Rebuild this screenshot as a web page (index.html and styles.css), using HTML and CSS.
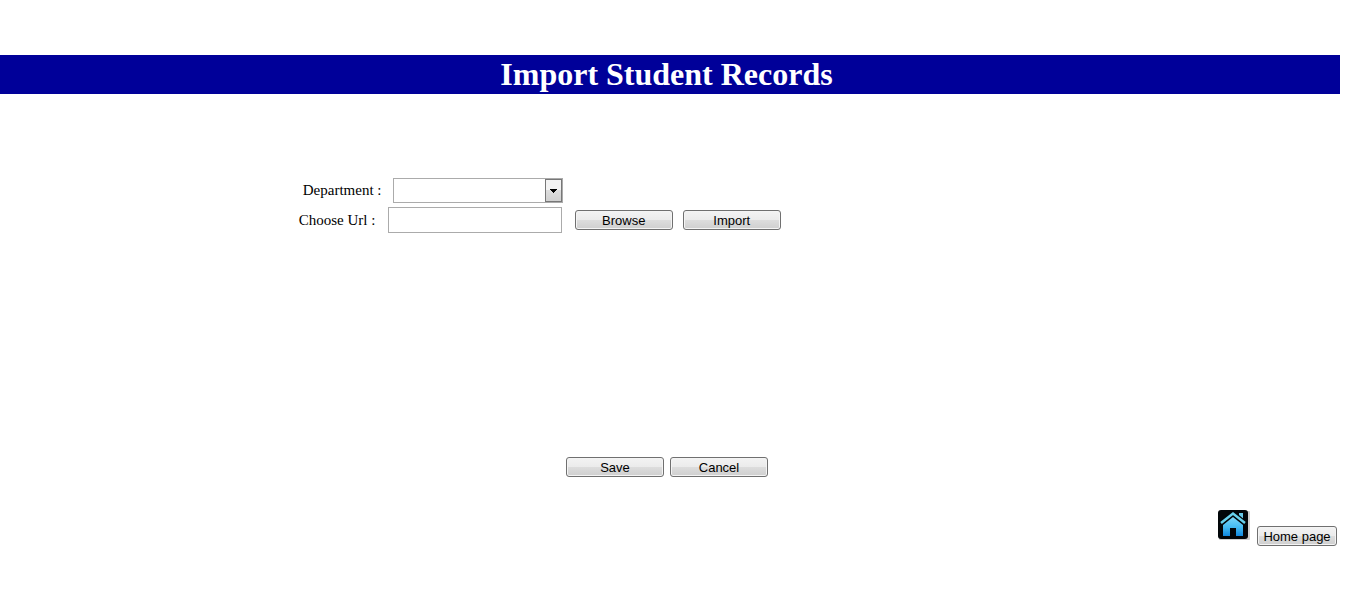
FILE: index.html
```html
<!DOCTYPE html>
<html lang="en">
<head>
<meta charset="utf-8">
<title>Import Student Records</title>
<link rel="stylesheet" href="styles.css">
</head>
<body>
<header class="banner"><h1 class="title">Import Student Records</h1></header>
<form class="form">
  <div class="fields">
    <div class="row row-department">
      <label class="label" for="department">Department :</label>
      <span class="combo">
        <select class="field" id="department"><option></option></select>
        <span class="combo-button"><svg width="7" height="4" viewBox="0 0 7 4" shape-rendering="crispEdges" aria-hidden="true"><path d="M0 0H7V1H6V2H5V3H4V4H3V3H2V2H1V1H0Z"/></svg></span>
      </span>
    </div>
    <div class="row row-url">
      <label class="label" for="url">Choose Url :</label>
      <input class="field url" id="url" type="text">
      <div class="buttons">
        <button class="button" type="button">Browse</button>
        <button class="button" type="button">Import</button>
      </div>
    </div>
  </div>
  <div class="actions">
    <button class="button" type="submit">Save</button>
    <button class="button" type="reset">Cancel</button>
  </div>
</form>
<footer class="footer">
  <svg class="home-icon" viewBox="0 0 32 32" aria-hidden="true">
    <defs><linearGradient id="house" x1="0" y1="0" x2="0" y2="1"><stop offset="0" stop-color="#7ad8fa"/><stop offset=".55" stop-color="#42baf2"/><stop offset="1" stop-color="#1088e0"/></linearGradient></defs>
    <rect x="1" y="2" width="31" height="29" rx="1" fill="#cfcfcf"/>
    <rect y="1" width="30" height="29" rx="3" fill="#020609"/>
    <path d="M21 4h4v8h-4z" fill="#68c8e9"/>
    <path d="M15 8 5 16v11h7v-8h6v8h7V16z" fill="url(#house)"/>
    <path d="M3 14 15 4l12 10" fill="none" stroke="#020609" stroke-width="4.5"/>
    <path d="M3 14 15 4.500l12 9.500" fill="none" stroke="#68d2ee" stroke-width="2.5"/>
  </svg>
  <button class="button home" type="button">Home page</button>
</footer>
</body>
</html>
```
FILE: styles.css
```css
* { box-sizing: border-box; }
body {
  margin: 0;
  padding-top: 55px;
  background: #fff;
  color: #000;
  font-family: "Liberation Serif", "Times New Roman", serif;
  font-size: 15px;
}
.banner {
  margin-right: 9px;
  padding: 1px 7px 2px 0;
  background: #000099;
}
.title {
  margin: 0;
  color: #fff;
  font-size: 32px;
  line-height: 36px;
  text-align: center;
}
.fields {
  display: grid;
  gap: 4px;
  padding: 84px 0 0 22%;
}
.row { display: flex; align-items: center; }
.row-department { padding-left: 6px; }
.row-url { padding-left: 2px; }
.label { width: 90px; white-space: nowrap; }
.field {
  border: 1px solid #ababab;
  border-radius: 0;
  background: #fff;
  padding: 0 4px;
  font: inherit;
}
.combo { position: relative; display: flex; width: 170px; }
.combo .field { width: 100%; height: 25px; appearance: none; }
.combo-button {
  position: absolute;
  inset: 1px 1px 1px auto;
  width: 17px;
  display: grid;
  place-items: center;
  border: 1px solid #777;
  background: linear-gradient(#f3f3f3 50%, #ddd 50%, #d0d0d0);
  pointer-events: none;
}
.row-url .label { width: 89px; }
.url { width: 174px; height: 26px; }
.buttons { display: flex; gap: 10px; margin-left: 13px; }
.button {
  width: 98px;
  height: 20px;
  padding: 2px 0 0;
  border: 1px solid #707070;
  border-radius: 3px;
  background: linear-gradient(#f3f3f3, #ebebeb 50%, #dddddd 50%, #cfcfcf);
  box-shadow: inset 0 0 0 1px #f4f4f4;
  color: #000;
  font: 13px/16px "Liberation Sans", Arial, sans-serif;
}
.actions {
  display: flex;
  justify-content: center;
  gap: 6px;
  padding: 224px 15px 0 0;
}
.footer {
  display: flex;
  justify-content: flex-end;
  align-items: flex-end;
  gap: 7px;
  padding: 32px 12px 0 0;
}
.home-icon { width: 32px; height: 32px; margin-bottom: 5px; }
.home { width: 80px; }
```
